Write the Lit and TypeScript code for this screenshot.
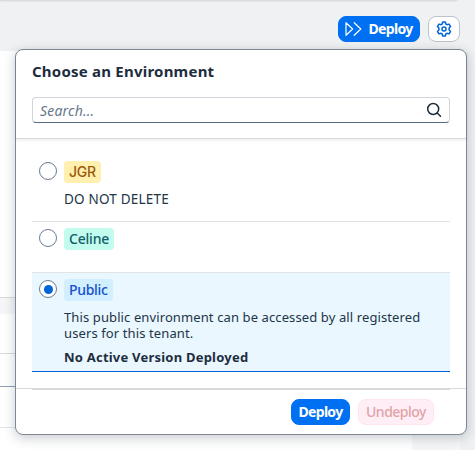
import { LitElement, html, css, nothing } from "lit";
import { customElement, property } from "lit/decorators.js";

@customElement("env-row")
class EnvRow extends LitElement {
  @property() name = "";
  @property() tone = "";
  @property() description = "";
  @property() status = "";
  @property({ type: Boolean, reflect: true }) selected = false;

  static styles = css`
    :host { display: flex; box-sizing: border-box; padding: 6px 0 0 7px; border-bottom: 1px solid #e0e3e6; gap: 8px; align-items: flex-start; }
    :host([selected]) { background: #eaf7ff; border-bottom-color: #0064d9; }
    .radio { box-sizing: border-box; width: 18px; height: 18px; margin-top: 1px; border: 1px solid #6b7b90; border-radius: 50%; background: #fff; display: grid; place-items: center; flex: none; margin-right: -1px; }
    .dot { width: 9px; height: 9px; border-radius: 50%; background: #0064d9; }
    .tag { display: block; height: 22px; line-height: 22px; padding: 0 0 0 5px; box-sizing: border-box; border-radius: 4px; font-weight: 500; font-size: 14px; white-space: nowrap; }
    .jgr { background: #fff0b0; color: #9b5a0a; width: 37px; font-family: Inter, sans-serif; letter-spacing: -0.3px; }
    .celine { background: #c2fcee; color: #0f5f6b; width: 50px; letter-spacing: -0.2px; }
    .public { background: #d1efff; color: #1450d0; width: 49px; letter-spacing: -0.3px; }
    .desc { margin: 8px 0 0; color: #223548; font-size: 13px; line-height: 16px; white-space: pre; letter-spacing: 0.11px; }
    .jgr-desc { font-size: 13.5px; letter-spacing: 0.2px; }
    .status { margin: 8px 0 0; font-weight: 700; color: #1d2d3e; font-size: 13px; line-height: 16px; letter-spacing: 0.22px; }
    .body { display: block; font-family: "Noto Sans", sans-serif; }
  `;

  render() {
    return html`
      <span class="radio">${this.selected ? html`<span class="dot"></span>` : nothing}</span>
      <div class="body">
        <span class="tag ${this.tone}">${this.name}</span>
        ${this.description ? html`<p class="desc ${this.tone}-desc">${this.description}</p>` : nothing}
        ${this.status ? html`<p class="status">${this.status}</p>` : nothing}
      </div>`;
  }
}

@customElement("app-root")
class AppRoot extends LitElement {
  static styles = css`
    :host { display: block; position: relative; width: 475px; height: 450px; overflow: hidden; background: #eff1f2; font-family: "Noto Sans", sans-serif; font-size: 14px; color: #1d2d3e; }
    .page { position: absolute; inset: 51px 63px 0 0; background: #fff; }
    .strip { height: 16px; margin-top: 246px; background: #f5f6f7; border-top: 1px solid #d9d9d9; }
    .rule { border-top: 1px solid #d9d9d9; }
    .r1 { margin-top: 39px; }
    .r2 { margin-top: 32px; border-color: #91a0ae; }
    .r3 { margin-top: 40px; border-color: #e5e5e5; }
    .side { position: absolute; left: 412px; top: 51px; width: 48px; bottom: 0; background: #f5f6f7; }
    .shell { position: absolute; left: 0; top: -6px; width: 457px; height: 7px; background: #d9dbdd; box-shadow: 0 0 2px #cfd3d7; }
    .toolbar { position: relative; display: flex; justify-content: flex-end; gap: 8px; padding: 16px 15px 0 0; height: 33px; }
    button { font: 700 14px/24px "Noto Sans", sans-serif; box-sizing: border-box; height: 26px; padding: 0; border: 1px solid #0070f2; border-radius: 8px; background: #0070f2; color: #fff; display: flex; align-items: center; justify-content: center; white-space: nowrap; }
    .main { width: 82px; gap: 6px; letter-spacing: -0.65px; }
    .gear { width: 32px; background: #fff; border-color: #bcc3ca; }
    .popover { position: relative; box-sizing: border-box; width: 452px; height: 386px; margin-left: 15px; background: #fff; border: 1px solid #7c8996; border-radius: 8px; box-shadow: 0 3px 12px rgba(34, 53, 72, 0.25); display: flex; flex-direction: column; }
    header { box-sizing: border-box; height: 89px; padding: 9px 16px 0; border-bottom: 1px solid #d9d9d9; box-shadow: 0 1px 3px rgba(34, 53, 72, 0.1); }
    h1 { margin: 0; font-size: 15px; line-height: 24px; font-weight: 700; white-space: nowrap; letter-spacing: 0.22px; }
    .search { box-sizing: border-box; height: 26px; margin-top: 14px; display: flex; align-items: center; justify-content: space-between; padding: 0 7px; border: 1px solid #d0d5db; border-bottom-color: #556b82; border-radius: 4px; color: #65788c; font-style: italic; letter-spacing: 0.2px; }
    main { padding: 15px 16px 0; height: 249px; box-sizing: border-box; }
    .a { height: 68px; padding-top: 7px; }
    .b { height: 51px; }
    .c { height: 99px; }
    footer { border-top: 1px solid #d9d9d9; flex: 1; padding: 0 16px; }
    .actions { border-top: 1px solid #d9d9d9; padding: 9px 16px 0 0; display: flex; gap: 8px; justify-content: flex-end; }
    .ok { width: 59px; letter-spacing: -0.7px; }
    .undo { width: 76px; background: #ffeef5; border-color: #ffe3ee; color: #dfa3a8; font-weight: 500; letter-spacing: -0.5px; }
    svg { display: block; fill: none; }
  `;

  render() {
    return html`
      <div class="page">
        <div class="strip"></div>
        <div class="rule r1"></div>
        <div class="rule r2"></div>
        <div class="rule r3"></div>
      </div>
      <div class="side"></div>
      <div class="shell"></div>
      <div class="toolbar">
        <button class="main">
          <svg width="17" height="16" viewBox="0 0 17 16" stroke="#fff" stroke-width="1.2" stroke-linejoin="round" stroke-linecap="round"><path d="M1 1.7v12.6L7.6 8zM9.2 1.7L15.8 8l-6.6 6.3"/></svg>
          <span>Deploy</span>
        </button>
        <button class="gear" aria-label="Settings">
          <svg width="16" height="16" viewBox="0 0 16 16" stroke="#0064d9" stroke-width="1.5" stroke-linejoin="round"><path d="M6.7 1h2.6l.5 2 1.2.7 2-.6 1.500 2.400L13.100 7v2l1.400 1.500L13 12.900l-2-.6-1.200.7-.5 2H6.700l-.5-2L5 12.300l-2 .6-1.500-2.400L2.900 9V7L1.500 5.500 3 3.100l2 .6L6.200 3z"/><circle cx="8" cy="8" r="2"/></svg>
        </button>
      </div>
      <section class="popover">
        <header>
          <h1>Choose an Environment</h1>
          <div class="search">
            <span>Search...</span>
            <svg width="16" height="16" viewBox="0 0 16 16" stroke="#1d2d3e" stroke-width="1.5" stroke-linecap="round"><circle cx="7.2" cy="7" r="5.5"/><path d="M11.2 11l3.3 3.2"/></svg>
          </div>
        </header>
        <main>
          <env-row class="a" name="JGR" tone="jgr" description="DO NOT DELETE"></env-row>
          <env-row class="b" name="Celine" tone="celine"></env-row>
          <env-row class="c" name="Public" tone="public" selected
            .description=${"This public environment can be accessed by all registered\nusers for this tenant."}
            status="No Active Version Deployed"></env-row>
        </main>
        <footer>
          <div class="actions">
            <button class="ok">Deploy</button>
            <button class="undo">Undeploy</button>
          </div>
        </footer>
      </section>`;
  }
}
